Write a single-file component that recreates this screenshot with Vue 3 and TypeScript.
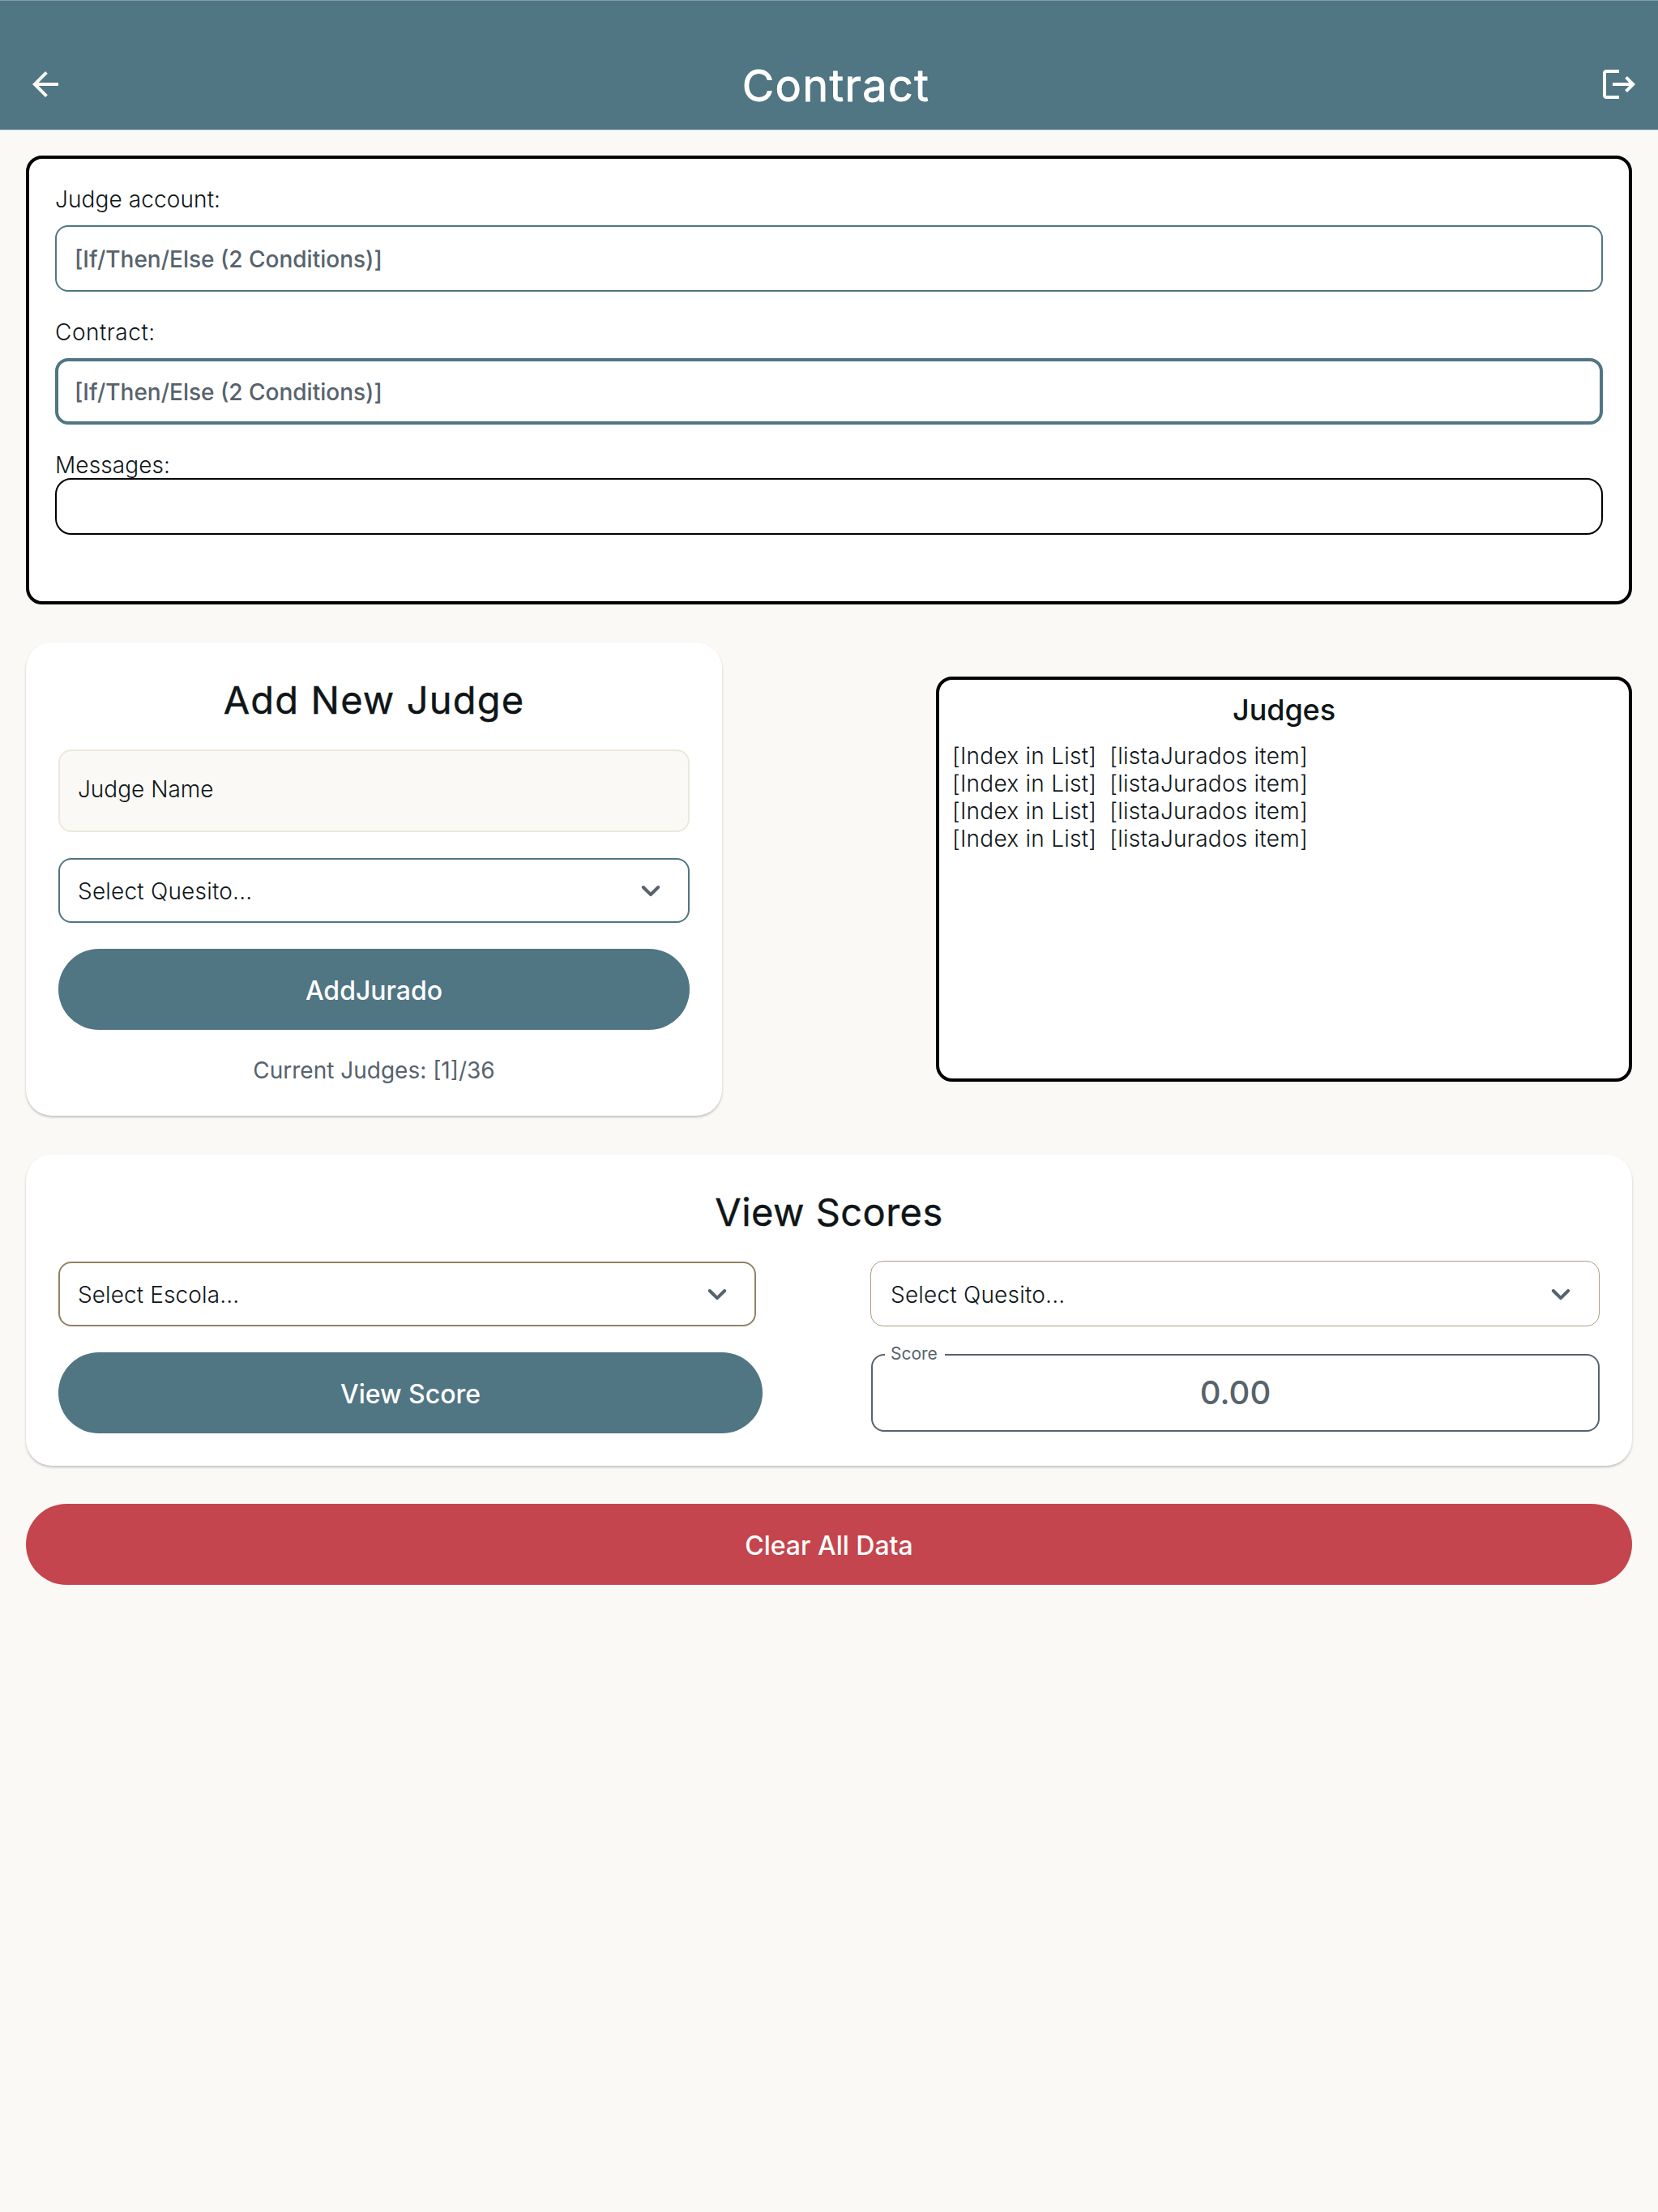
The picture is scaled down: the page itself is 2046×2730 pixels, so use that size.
<script setup lang="ts">
interface Judge {
  index: string
  item: string
}

const placeholder = '[If/Then/Else (2 Conditions)]'
const judges: Judge[] = Array.from({ length: 4 }, () => ({
  index: '[Index in List]',
  item: '[listaJurados item]',
}))
</script>

<template>
  <div class="page">
    <header class="bar">
      <svg class="icon back" viewBox="0 0 24 24"><path d="M20 11H7.83l5.59-5.59L12 4l-8 8 8 8 1.41-1.41L7.83 13H20v-2z" /></svg>
      <h1>Contract</h1>
      <svg class="icon logout" viewBox="0 0 24 24"><path d="M17 7l-1.41 1.41L18.17 11H8v2h10.17l-2.58 2.58L17 17l5-5zM4 5h8V3H4c-1.1 0-2 .9-2 2v14c0 1.1.9 2 2 2h8v-2H4V5z" /></svg>
    </header>

    <main>
      <section class="outlined account">
        <label>Judge account:</label>
        <div class="field">{{ placeholder }}</div>
        <label class="wide">Contract:</label>
        <div class="field focused">{{ placeholder }}</div>
        <label class="tight">Messages:</label>
        <div class="messages"></div>
      </section>

      <div class="row">
        <section class="card add">
          <h2>Add New Judge</h2>
          <div class="name">Judge Name</div>
          <div class="select teal">
            <span>Select Quesito...</span>
            <svg class="icon chevron" viewBox="0 0 24 24"><path d="M8.12 9.29 12 13.17l3.88-3.88c.39-.39 1.02-.39 1.41 0 .39.39.39 1.02 0 1.41l-4.59 4.59c-.39.39-1.02.39-1.41 0L6.7 10.7c-.39-.39-.39-1.02 0-1.41.39-.38 1.03-.39 1.42 0z" /></svg>
          </div>
          <button class="btn">AddJurado</button>
          <p class="count">Current Judges: [1]/36</p>
        </section>

        <section class="outlined judges">
          <h3>Judges</h3>
          <div v-for="(judge, i) in judges" :key="i" class="judge">
            <span>{{ judge.index }}</span>
            <span>{{ judge.item }}</span>
          </div>
        </section>
      </div>

      <section class="card scores">
        <h2>View Scores</h2>
        <div class="columns">
          <div class="left">
            <div class="select brown">
              <span>Select Escola...</span>
              <svg class="icon chevron" viewBox="0 0 24 24"><path d="M8.12 9.29 12 13.17l3.88-3.88c.39-.39 1.02-.39 1.41 0 .39.39.39 1.02 0 1.41l-4.59 4.59c-.39.39-1.02.39-1.41 0L6.7 10.7c-.39-.39-.39-1.02 0-1.41.39-.38 1.03-.39 1.42 0z" /></svg>
            </div>
            <button class="btn">View Score</button>
          </div>
          <div class="right">
            <div class="select sand">
              <span>Select Quesito...</span>
              <svg class="icon chevron" viewBox="0 0 24 24"><path d="M8.12 9.29 12 13.17l3.88-3.88c.39-.39 1.02-.39 1.41 0 .39.39.39 1.02 0 1.41l-4.59 4.59c-.39.39-1.02.39-1.41 0L6.7 10.7c-.39-.39-.39-1.02 0-1.41.39-.38 1.03-.39 1.42 0z" /></svg>
            </div>
            <div class="score">
              <span class="caption">Score</span>
              <span>0.00</span>
            </div>
          </div>
        </div>
      </section>

      <button class="btn danger">Clear All Data</button>
    </main>
  </div>
</template>

<style>
body {
  margin: 0;
  background: #faf9f5;
}
</style>

<style scoped>
.page {
  min-height: 2730px;
  background: #faf9f5;
  color: #0f1618;
  font: 300 28px/34px Inter, 'Liberation Sans', sans-serif;
  letter-spacing: 0.1px;
}
.page * {
  box-sizing: border-box;
}
h1, h2, h3, p {
  margin: 0;
}
h1, h2 {
  font-weight: 400;
  -webkit-text-stroke: 0.4px currentColor;
}
.icon {
  display: block;
  width: 48px;
  height: 48px;
  flex: none;
  fill: currentColor;
}
.bar {
  height: 160px;
  padding: 47px 24px 0 32px;
  border-top: 1px solid #84a0a9;
  box-shadow: 0 1px 0 #dce2e1;
  background: #507583;
  color: #fff;
  display: flex;
  align-items: center;
}
.back {
  color: #faf9f5;
}
h1 {
  flex: 1;
  padding: 4px 0 0 9px;
  font-size: 54px;
  line-height: 64px;
  letter-spacing: 1.35px;
  text-align: center;
  -webkit-text-stroke-width: 0.8px;
}
main {
  padding: 32px 32px 0;
  display: flex;
  flex-direction: column;
}
.outlined {
  border: 4px solid #000;
  border-radius: 20px;
  background: #fff;
}
.account {
  height: 554px;
  padding: 33px 32px 0;
  display: flex;
  flex-direction: column;
}
label {
  display: block;
  height: 49px;
}
label.wide {
  letter-spacing: 0.5px;
}
label.tight {
  height: 33px;
}
.field {
  height: 82px;
  margin-bottom: 33px;
  padding: 2px 22px 0;
  border: 2px solid #507583;
  border-radius: 16px;
  color: #57636c;
  font-weight: 500;
  letter-spacing: 0;
  display: flex;
  align-items: center;
}
.focused {
  border-width: 4px;
  padding: 2px 20px 0;
}
.messages {
  height: 70px;
  border: 2px solid #000;
  border-radius: 20px;
}
.row {
  margin-top: 47px;
  display: flex;
  justify-content: space-between;
  align-items: center;
}
.card {
  padding: 40px;
  border-radius: 32px;
  background: #fff;
  box-shadow: 0 2px 3px rgba(0, 0, 0, 0.22);
}
h2 {
  padding-top: 2px;
  font-size: 47px;
  line-height: 58px;
  letter-spacing: 1.15px;
  text-align: center;
}
.add {
  width: 859px;
  height: 584px;
}
.name {
  height: 102px;
  margin: 32px 0 32px;
  padding: 30px 22px;
  border: 2px solid #ece8dc;
  border-radius: 16px;
  background: #faf9f5;
  letter-spacing: 0;
}
.select {
  height: 80px;
  padding: 0 22px;
  border: 2px solid #507583;
  border-radius: 16px;
  letter-spacing: 0.2px;
  display: flex;
  align-items: center;
  justify-content: space-between;
}
.select span {
  padding-top: 1px;
}
.select .icon {
  color: #57636c;
}
.btn {
  display: block;
  width: 100%;
  height: 100px;
  padding: 4px 0 0;
  border: 0;
  border-radius: 50px;
  background: #507583;
  color: #fff;
  font: 500 32px/40px Inter, 'Liberation Sans', sans-serif;
  text-align: center;
}
.add .btn {
  margin-top: 32px;
}
.count {
  margin-top: 33px;
  color: #57636c;
  font-weight: 400;
  letter-spacing: 0;
  text-align: center;
}
.judges {
  width: 859px;
  height: 500px;
  padding: 15px 16px;
}
h3 {
  margin-bottom: 18px;
  font-size: 36px;
  line-height: 44px;
  font-weight: 500;
  letter-spacing: -0.1px;
  text-align: center;
}
.judge {
  letter-spacing: 0.25px;
  display: flex;
  gap: 16px;
}
.scores {
  height: 384px;
  margin-top: 48px;
}
.scores h2 {
  letter-spacing: 0.45px;
}
.columns {
  margin-top: 31px;
  display: flex;
  justify-content: space-between;
}
.left {
  width: 869px;
  padding-top: 1px;
}
.right {
  width: 900px;
}
.brown {
  width: 861px;
  border-color: #928163;
  letter-spacing: 0.1px;
}
.sand {
  height: 81px;
  border: 1px solid #ac9e83;
  padding: 1px 23px 0 24px;
}
.left .btn {
  margin-top: 32px;
}
.score {
  position: relative;
  height: 96px;
  margin: 34px 0 0 1px;
  border: 2px solid #57636c;
  border-radius: 16px;
  color: #57636c;
  font-size: 40px;
  font-weight: 500;
  letter-spacing: 0;
  display: flex;
  align-items: center;
  justify-content: center;
}
.caption {
  position: absolute;
  top: -14px;
  left: 15px;
  padding: 0 9px 0 7px;
  background: #fff;
  font-size: 21px;
  font-weight: 400;
  line-height: 24px;
}
.danger {
  margin-top: 47px;
  background: #c4454d;
}
</style>
